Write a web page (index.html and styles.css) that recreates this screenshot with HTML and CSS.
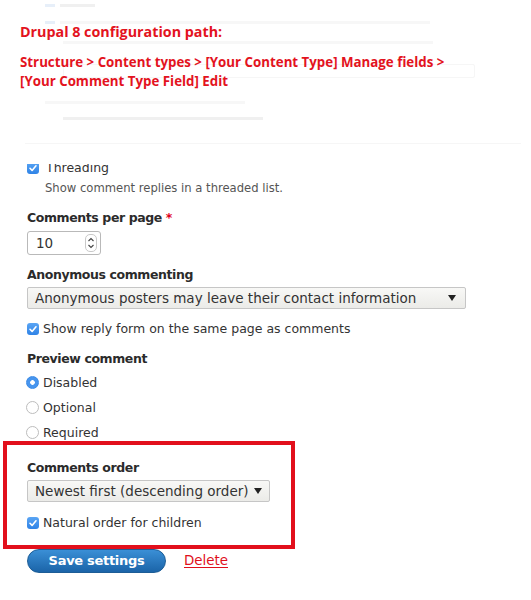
FILE: index.html
```html
<!DOCTYPE html>
<html>
<head>
<meta charset="utf-8">
<link rel="stylesheet" href="styles.css">
</head>
<body>
<div class="page">
  <div class="ghost">
    <div class="g-row g1"><span class="g-blue"></span><span class="g-bar w35"></span></div>
    <div class="g-row g2"><span class="g-blue"></span><span class="g-bar faint w370"></span></div>
    <div class="g-row g3"><span class="g-bar faint w370"></span></div>
    <div class="g-box"></div>
    <div class="g-row g4"><span class="g-bar faint w200"></span></div>
    <div class="g-row g5"><span class="g-bar w200"></span></div>
    <div class="g-line"></div>
    <div class="note">
      <p class="note-title">Drupal 8 configuration path:</p>
      <p class="note-path">Structure &gt; Content types &gt; [Your Content Type] Manage fields &gt; [Your Comment Type Field] Edit</p>
    </div>
  </div>

  <div class="clip">
    <label class="check-row thread">
      <span class="cb"><svg viewBox="0 0 12 12" width="12" height="12"><path d="M3 6.3 L5.1 8.4 L9 3.8" fill="none" stroke="#fff" stroke-width="1.6" stroke-linecap="round" stroke-linejoin="round"/></svg></span>
      <span>Threading</span>
    </label>
  </div>
  <div class="desc">Show comment replies in a threaded list.</div>

  <div class="field f1">
    <div class="label">Comments per page <span class="req">*</span></div>
    <div class="number">
      <span>10</span>
      <span class="spin"><svg viewBox="0 0 8 14" width="8" height="14"><path d="M1.5 5 L4 2.5 L6.5 5 M1.5 9 L4 11.5 L6.5 9" fill="none" stroke="#444" stroke-width="1.1"/></svg></span>
    </div>
  </div>

  <div class="field f2">
    <div class="label">Anonymous commenting</div>
    <div class="select wide"><span>Anonymous posters may leave their contact information</span><span class="arrow"></span></div>
  </div>

  <label class="check-row reply">
    <span class="cb"><svg viewBox="0 0 12 12" width="12" height="12"><path d="M3 6.3 L5.1 8.4 L9 3.8" fill="none" stroke="#fff" stroke-width="1.6" stroke-linecap="round" stroke-linejoin="round"/></svg></span>
    <span>Show reply form on the same page as comments</span>
  </label>

  <div class="field radios">
    <div class="label">Preview comment</div>
    <label class="radio-row"><span class="rb on"></span><span>Disabled</span></label>
    <label class="radio-row"><span class="rb"></span><span>Optional</span></label>
    <label class="radio-row"><span class="rb"></span><span>Required</span></label>
  </div>

  <div class="highlight">
    <div class="label">Comments order</div>
    <div class="select narrow"><span>Newest first (descending order)</span><span class="arrow"></span></div>
    <label class="check-row natural">
      <span class="cb"><svg viewBox="0 0 12 12" width="12" height="12"><path d="M3 6.3 L5.1 8.4 L9 3.8" fill="none" stroke="#fff" stroke-width="1.6" stroke-linecap="round" stroke-linejoin="round"/></svg></span>
      <span>Natural order for children</span>
    </label>
  </div>

  <div class="actions">
    <button class="save">Save settings</button>
    <a class="delete" href="#">Delete</a>
  </div>
</div>
</body>
</html>
```
FILE: styles.css
```css
html, body { margin: 0; padding: 0; background: #fff; }
body {
  font-family: "DejaVu Sans", Verdana, sans-serif;
  font-size: 12.5px;
  color: #333;
}
.page { width: 531px; height: 600px; overflow: hidden; }

/* faded screenshot background */
.ghost { position: relative; height: 164px; }
.g-row { display: flex; align-items: center; gap: 5px; margin-left: 45px; height: 4px; }
.g1 { padding-top: 3px; }
.g2 { margin-top: 13px; }
.g3 { margin-top: 16px; margin-left: 63px; }
.g4 { margin-top: 22px; }
.g5 { margin-top: 12px; margin-left: 63px; }
.g-blue { width: 10px; height: 3px; background: #e7eff9; }
.g-bar { height: 3px; background: #f0f0f0; }
.g-bar.faint { background: #f7f7f7; }
.w35 { width: 35px; }
.w200 { width: 200px; }
.w370 { width: 370px; }
.g-box { margin: 20px 0 0 63px; width: 410px; height: 12px; border: 1px solid #f6f6f6; border-radius: 2px; }
.g-line { margin: 23px 10px 0 25px; height: 1px; background: #f6f6f6; }

.note { position: absolute; left: 20px; top: 22px; color: #e3131e; font-family: "Open Sans", sans-serif; font-weight: 700; }
.note p { margin: 0; }
.note-title { font-size: 14.3px; line-height: 20px; }
.note-path { font-size: 13.3px; line-height: 19px; margin-top: 11px !important; width: 440px; }

/* threading row, top partly hidden */
.clip { height: 12px; overflow: hidden; }
.clip .check-row { margin-top: -5px; }

.check-row { display: flex; align-items: center; gap: 4px; margin-left: 27px; color: #333; font-size: 12.5px; line-height: 17px; height: 17px; }
.check-row.thread { gap: 7px; }
.check-row.reply { margin-top: 11.5px; }
.check-row.natural { margin: 12.5px 0 0 0; }
.cb { width: 12px; height: 12px; border-radius: 3px; background: linear-gradient(#5aa5f4, #2f83e6); display: inline-flex; flex: none; }

.desc { margin: 4px 0 0 45px; font-size: 11.6px; color: #555; line-height: 16px; }

.field { margin-left: 27px; }
.f1 { margin-top: 13px; }
.f2 { margin-top: 11px; }
.label { font-weight: 700; font-size: 12.5px; letter-spacing: -0.4px; line-height: 17px; color: #2b2b2b; }
.req { color: #e0001b; letter-spacing: 0; }

.number { margin-top: 5px; height: 22px; border: 1px solid #b9b9b9; border-radius: 3px; display: flex; align-items: center; justify-content: space-between; padding: 0 3px 0 8px; width: 61px; font-size: 13.5px; background: #fff; }
.spin { width: 10px; height: 16px; border: 1px solid #c9c9c9; border-radius: 5px; display: flex; align-items: center; justify-content: center; }

.select { margin-top: 3.5px; height: 20px; border: 1px solid #c6c6c6; border-radius: 2px; background: linear-gradient(#f8f8f6, #ebebe8); display: flex; align-items: center; justify-content: space-between; padding: 0 9px 0 7px; font-size: 13.5px; color: #333; }
.select.wide { width: 421px; }
.select.narrow { width: 227px; padding-right: 7px; }
.arrow { width: 0; height: 0; border-left: 4.5px solid transparent; border-right: 4.5px solid transparent; border-top: 6px solid #222; }

.radios { margin-top: 13px; }
.radios .label { margin-bottom: 3px; }
.radio-row { display: flex; align-items: center; gap: 4px; height: 25px; font-size: 12.5px; color: #333; margin-left: -1px; }
.rb { width: 11px; height: 11px; border-radius: 50%; border: 1px solid #bdbdbd; background: #fff; flex: none; }
.rb.on { border-color: #3a8ae6; background: radial-gradient(circle, #fff 0 2px, #4795ee 2.6px); }

.highlight { margin: -4.5px 0 0 3px; width: 264px; border: 4px solid #e2101c; padding: 14.5px 0 13.5px 20px; }

.actions { margin: 0 0 0 27px; display: flex; align-items: center; gap: 18px; height: 24px; }
.save { width: 139px; height: 24px; border-radius: 12px; border: 1px solid #1d5d96; background: linear-gradient(#3a8fd6, #1b64a8); color: #fff; font-family: "DejaVu Sans", sans-serif; font-weight: 700; font-size: 13px; letter-spacing: -0.3px; padding: 0; line-height: 22px; }
.delete { color: #e0101c; font-size: 13.4px; text-decoration: underline; text-underline-offset: 2px; }
```
